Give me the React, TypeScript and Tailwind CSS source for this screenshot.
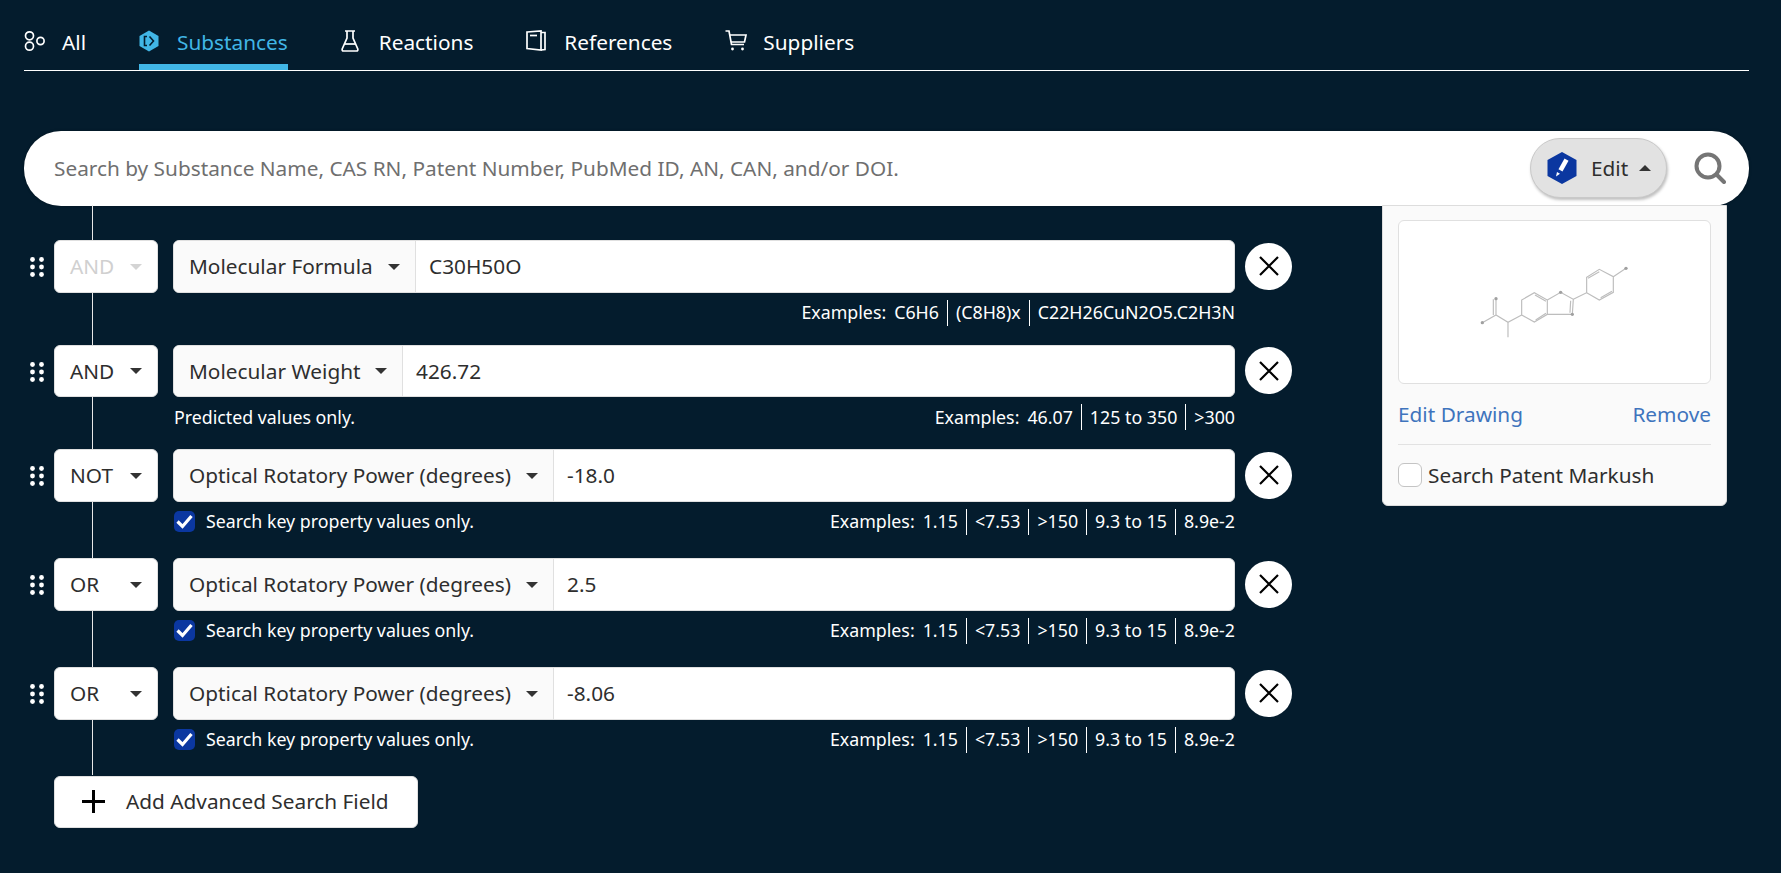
import React from "react";

function Caret({ up = false, muted = false }: { up?: boolean; muted?: boolean }) {
  return (
    <svg width="12" height="6" viewBox="0 0 12 6" className="shrink-0">
      <path d={up ? "M0 6 L6 0 L12 6 Z" : "M0 0 L12 0 L6 6 Z"} fill={muted ? "#d4d4d4" : "#333333"} />
    </svg>
  );
}

function AllIcon() {
  return (
    <svg width="22" height="22" viewBox="0 0 22 22" fill="none" stroke="#fff" strokeWidth="1.7">
      <circle cx="5.5" cy="5.8" r="4" />
      <circle cx="5.5" cy="16.2" r="4" />
      <circle cx="16.5" cy="11" r="3.6" />
    </svg>
  );
}
function SubstanceIcon() {
  return (
    <svg width="20" height="22" viewBox="0 0 20 22">
      <path d="M10 .5 L19.5 6 V16 L10 21.5 L.5 16 V6 Z" fill="#41b6e6" />
      <path d="M8 6.5 H5.5 V15.5 H8 M10.5 6.5 L14.5 11 L10.5 15.5" fill="none" stroke="#041c2d" strokeWidth="1.6" />
    </svg>
  );
}
function FlaskIcon() {
  return (
    <svg width="18" height="22" viewBox="0 0 18 22" fill="none" stroke="#fff" strokeWidth="1.7">
      <path d="M4 1 H14 M6 1 V8 L1.2 19 Q.8 21 2.5 21 H15.5 Q17.2 21 16.8 19 L12 8 V1" />
      <path d="M3.5 14 H14.5" />
    </svg>
  );
}
function BookIcon() {
  return (
    <svg width="20" height="22" viewBox="0 0 20 22" fill="none" stroke="#fff" strokeWidth="1.7">
      <path d="M1 2 L15 1 V20 L1 18.5 Z" />
      <path d="M15 2.5 H19 V19.5 L15 20" />
      <path d="M4 5.5 H11" />
    </svg>
  );
}
function CartIcon() {
  return (
    <svg width="22" height="22" viewBox="0 0 22 22" fill="none" stroke="#fff" strokeWidth="1.7">
      <path d="M.5 1 H4 L6.5 14.5 H19" />
      <path d="M5 5 H21 L19.5 12 H6" />
      <circle cx="7.5" cy="19" r="1.4" fill="#fff" stroke="none" />
      <circle cx="17.5" cy="19" r="1.4" fill="#fff" stroke="none" />
    </svg>
  );
}
function Grip() {
  return (
    <svg width="14" height="20" viewBox="0 0 14 20" fill="#fff" className="shrink-0">
      {[2.5, 10, 17.5].map((y) => (
        <g key={y}>
          <circle cx="2.5" cy={y} r="2.4" />
          <circle cx="11.5" cy={y} r="2.4" />
        </g>
      ))}
    </svg>
  );
}
function CheckBox() {
  return (
    <span className="flex h-[21px] w-[21px] shrink-0 items-center justify-center rounded-[5px] bg-[#0b37a0]">
      <svg width="17" height="15" viewBox="0 0 17 15" fill="none" stroke="#fff" strokeWidth="3.2">
        <path d="M1.5 7.5 L6.5 12.5 L15.5 2" />
      </svg>
    </span>
  );
}
function Molecule() {
  const bonds = "M127 188 L168 165 L204 187 L245 165 M168 165 V118 M204 187 V232 M245 165 V120 L283 98 L322 120 V163 L283 186 L245 165 M322 120 L362 97 L400 118 L397 163 H322 M400 118 L440 98 V52 L478 28 L520 50 V97 L478 120 L440 98 M520 50 L558 25";
  const doubles = "M160 165 V118 M285 105 L318 124 M287 180 L318 160 M392 122 L390 158 M444 55 L478 35 M482 113 L516 94";
  return (
    <svg width="311" height="162" viewBox="0 0 311 162" className="block blur-[0.4px]">
      <g transform="translate(41 39) scale(0.3333)" fill="none" stroke="#bdbdbd" strokeWidth="3.5">
        <path d={bonds} />
        <path d={doubles} />
        {[[127, 188], [168, 116], [362, 97], [397, 163], [558, 25]].map(([x, y]) => (
          <circle key={x} cx={x} cy={y} r="5" fill="#a0a0a0" stroke="none" />
        ))}
      </g>
    </svg>
  );
}

type Row = {
  op: string;
  muted?: boolean;
  field: string;
  selectW: string;
  value: string;
  left?: string;
  check?: boolean;
  examples: string[];
  after: string;
};

const ROPT = ["1.15", "<7.53", ">150", "9.3 to 15", "8.9e-2"];
const rows: Row[] = [
  { op: "AND", muted: true, field: "Molecular Formula", selectW: "w-[242px]", value: "C30H50O", examples: ["C6H6", "(C8H8)x", "C22H26CuN2O5.C2H3N"], after: "h-[52px]" },
  { op: "AND", field: "Molecular Weight", selectW: "w-[229px]", value: "426.72", left: "Predicted values only.", examples: ["46.07", "125 to 350", ">300"], after: "h-[52px]" },
  { op: "NOT", field: "Optical Rotatory Power (degrees)", selectW: "w-[380px]", value: "-18.0", check: true, examples: ROPT, after: "h-[56.5px]" },
  { op: "OR", field: "Optical Rotatory Power (degrees)", selectW: "w-[380px]", value: "2.5", check: true, examples: ROPT, after: "h-[56.5px]" },
  { op: "OR", field: "Optical Rotatory Power (degrees)", selectW: "w-[380px]", value: "-8.06", check: true, examples: ROPT, after: "h-[56px]" },
];

const tabs = [
  { label: "All", icon: <AllIcon /> },
  { label: "Substances", icon: <SubstanceIcon />, active: true },
  { label: "Reactions", icon: <FlaskIcon /> },
  { label: "References", icon: <BookIcon /> },
  { label: "Suppliers", icon: <CartIcon /> },
];

export default function App() {
  return (
    <div className="h-[873px] overflow-hidden bg-[#041c2d] pl-6 pr-8 text-[20.8px] text-[#2e2e2e] [font-family:'Noto_Sans',sans-serif]">
      <nav className="flex h-[71px] gap-[53px] border-b border-white">
        {tabs.map((t) => (
          <div
            key={t.label}
            className={
              t.active
                ? "flex h-[70px] items-center border-b-[6px] border-[#41b6e6] pt-[20px] text-[#41b6e6]"
                : "flex h-[70px] items-center border-b-[6px] border-transparent pt-[20px] text-white"
            }
          >
            <span className="mr-3 -mt-[3px] flex w-[26px]">{t.icon}</span>
            <span className="leading-[27px]">{t.label}</span>
          </div>
        ))}
      </nav>

      <div className="relative mt-[60px] flex h-[74.5px] items-center rounded-[37px] bg-white pl-[30px] pr-[23px] shadow-[0_0_3px_rgba(0,0,0,0.3)]">
        <span className="flex-1 text-[#6f6f6f]">Search by Substance Name, CAS RN, Patent Number, PubMed ID, AN, CAN, and/or DOI.</span>
        <div className="flex h-[60px] w-[137px] items-center rounded-[30px] border border-[#c9c9c9] bg-[#e2e2e2] pl-4 shadow-[1px_2px_3px_rgba(0,0,0,0.25)]">
          <svg width="30" height="32" viewBox="0 0 30 32" className="shrink-0">
            <path d="M15 0 L29.5 8 V24 L15 32 L.5 24 V8 Z" fill="#0b37a0" />
            <path d="M17.5 6.5 L21.5 8.8 L15.5 19.5 L11.5 17.2 Z" fill="#fff" />
            <path d="M10 20 L13 21.8 L9 24.5 Z" fill="#fff" />
          </svg>
          <span className="ml-[14px] mr-[11px] leading-[27px]">Edit</span>
          <Caret up />
        </div>
        <svg width="32" height="32" viewBox="0 0 32 32" fill="none" stroke="#757575" strokeWidth="4" className="ml-[27px] shrink-0">
          <circle cx="14" cy="14" r="11.5" />
          <path d="M22.5 22.5 L30 30" strokeLinecap="round" />
        </svg>

        <div className="absolute right-[22px] top-[74px] z-10 flex h-[301px] w-[345px] flex-col rounded-b-[6px] border border-[#dddddd] bg-[#fafafa] px-[15px] pt-[14px]">
          <div className="h-[164px] rounded-[6px] border border-[#e0e0e0] bg-white">
            <Molecule />
          </div>
          <div className="mt-[17px] flex justify-between leading-[27px] text-[#3f74bd]">
            <span>Edit Drawing</span>
            <span>Remove</span>
          </div>
          <div className="mt-[16px] border-t border-[#e2e2e2]" />
          <div className="mt-[18px] flex items-center">
            <span className="h-6 w-6 rounded-[6px] border border-[#c4c4c4] bg-white" />
            <span className="ml-[6px] leading-[24px]">Search Patent Markush</span>
          </div>
        </div>
      </div>

      <div className="relative mt-[34.5px] w-[1268px]">
        <div className="absolute -top-[35px] left-[68px] h-[570px] w-px bg-[#e8e8e8]" />
        {rows.map((r, i) => (
          <div key={i} className="relative">
            <div className="flex h-[52.5px] items-center">
              <span className="flex w-[30px] pl-[6px] pt-[2px]">
                <Grip />
              </span>
              <div className="flex h-full w-[104px] items-center justify-between rounded-[6px] border border-[#e0e0e0] bg-white pl-[15px] pr-[15px] pt-[1px]">
                <span className={r.muted ? "text-[#d0d0d0]" : ""}>{r.op}</span>
                <Caret muted={r.muted} />
              </div>
              <div className="ml-[15px] flex h-full w-[1062px] overflow-hidden rounded-[6px] border border-[#e0e0e0] bg-white">
                <div className={"flex h-full shrink-0 items-center justify-between border-r border-[#e0e0e0] bg-[#fafafa] pl-[15px] pr-[15px] pt-[1px] " + r.selectW}>
                  <span className="whitespace-nowrap">{r.field}</span>
                  <Caret />
                </div>
                <span className="flex items-center pl-[13px] pt-[1px]">{r.value}</span>
              </div>
              <span className="ml-[10px] flex h-[47px] w-[47px] shrink-0 items-center justify-center rounded-full bg-white">
                <svg width="22" height="22" viewBox="0 0 22 22" fill="none" stroke="#000" strokeWidth="2.2">
                  <path d="M2 2 L20 20 M20 2 L2 20" />
                </svg>
              </span>
            </div>
            <div className={"ml-[149px] flex w-[1062px] items-start justify-between pt-[7px] text-[17.8px] text-white " + r.after}>
              <span className="flex h-[26px] items-center">
                {r.check && <span className="ml-px flex"><CheckBox /></span>}
                {r.check && <span className="ml-[11px]">Search key property values only.</span>}
                {r.left && <span className="ml-px">{r.left}</span>}
              </span>
              <span className="flex h-[26px] items-center">
                <span className="mr-2">Examples:</span>
                {r.examples.map((e, j) => (
                  <span key={e} className={j === 0 ? "flex h-full items-center pr-2" : j === r.examples.length - 1 ? "flex h-full items-center border-l border-white pl-2" : "flex h-full items-center border-l border-white px-2"}>
                    {e}
                  </span>
                ))}
              </span>
            </div>
          </div>
        ))}
        <div className="relative ml-[30px] flex h-[52.5px] w-[364px] items-center rounded-[6px] border border-[#e0e0e0] bg-white pl-[27px]">
          <svg width="23" height="23" viewBox="0 0 23 23" fill="none" stroke="#000" strokeWidth="3" className="shrink-0">
            <path d="M11.5 0 V23 M0 11.5 H23" />
          </svg>
          <span className="ml-[21px] whitespace-nowrap">Add Advanced Search Field</span>
        </div>
      </div>
    </div>
  );
}
